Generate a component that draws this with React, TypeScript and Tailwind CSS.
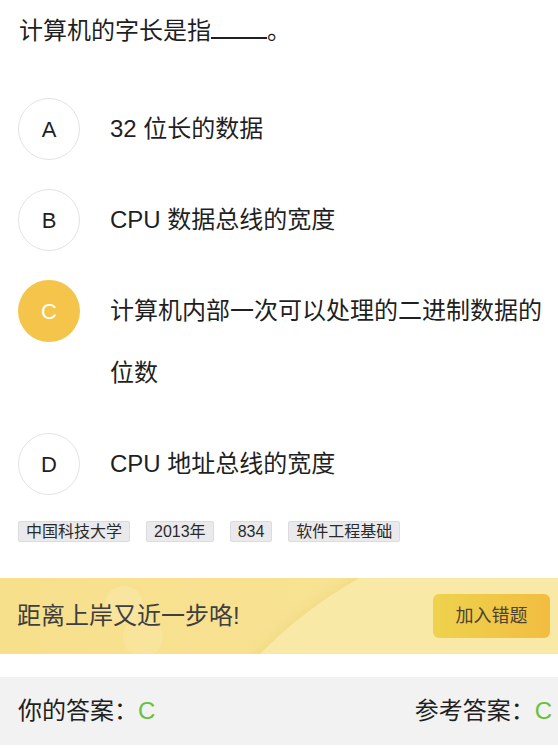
import React from "react";

// 选项数据
const options = [
  { key: "A", text: "32 位长的数据" },
  { key: "B", text: "CPU 数据总线的宽度" },
  { key: "C", text: "计算机内部一次可以处理的二进制数据的位数" },
  { key: "D", text: "CPU 地址总线的宽度" },
];

const tags = ["中国科技大学", "2013年", "834", "软件工程基础"];

const selected = "C";

const App = () => {
  return (
    <div className="w-[558px] h-[748px] bg-white overflow-hidden font-['Liberation_Sans','Noto_Sans_CJK_SC',sans-serif] text-[#1f1f1f]">
      {/* 题干 */}
      <div className="pt-[13px] px-[19px]">
        <p className="text-[24px] leading-[36px]">
          计算机的字长是指
          <span className="inline-block w-[56px] h-[22px] border-b-2 border-[#1f1f1f] align-baseline"></span>
          。
        </p>
      </div>

      {/* 选项 */}
      <div className="mt-[49px] pl-[18px] flex flex-col gap-[29px]">
        {options.map((opt) => {
          const active = opt.key === selected;
          return (
            <div key={opt.key} className="flex items-start gap-[30px]">
              <div
                className={
                  active
                    ? "shrink-0 w-[62px] h-[62px] rounded-full bg-[#f4c54a] text-white flex items-center justify-center text-[22px]"
                    : "shrink-0 w-[62px] h-[62px] rounded-full border border-[#e3e3e3] text-[#1f1f1f] flex items-center justify-center text-[22px]"
                }
              >
                {opt.key}
              </div>
              <div className="text-[24px] leading-[62px]">{opt.text}</div>
            </div>
          );
        })}
      </div>

      {/* 标签 */}
      <div className="mt-[26px] px-[18px] flex gap-[16px]">
        {tags.map((t) => (
          <span
            key={t}
            className="px-[7px] text-[16px] leading-[19px] text-[#2a2a2a] bg-[#eaeaec] border border-[#dcdcde] rounded-[2px]"
          >
            {t}
          </span>
        ))}
      </div>

      {/* 横幅 */}
      <div className="relative mt-[36px] h-[76px] overflow-hidden bg-gradient-to-r from-[#f7e08c] to-[#f8e498] flex items-center justify-between pl-[17px] pr-[8px]">
        <div className="absolute left-[140px] top-[-53px] w-[850px] h-[850px] rounded-full bg-[#f9e9a7] shadow-[-6px_0_10px_rgba(236,205,110,0.35)]"></div>
        <div className="absolute left-[105px] top-[8px] w-[38px] h-[38px] rounded-full bg-white/15"></div>
        <div className="absolute left-[123px] top-[39px] w-[40px] h-[40px] rounded-full bg-white/10"></div>
        <span className="relative text-[24px] text-[#3f3f3f]">距离上岸又近一步咯!</span>
        <button className="relative w-[117px] h-[44px] rounded-[6px] bg-gradient-to-r from-[#eed24e] to-[#f2bd40] text-[18px] text-[#4d4230]">
          加入错题
        </button>
      </div>

      {/* 答案 */}
      <div className="mt-[23px] h-[68px] bg-[#f2f2f2] flex items-center justify-between pl-[18px] pr-[6px] text-[24px] text-[#1f1f1f]">
        <span>
          你的答案：<span className="text-[#67c23a]">C</span>
        </span>
        <span>
          参考答案：<span className="text-[#67c23a]">C</span>
        </span>
      </div>
    </div>
  );
};

export default App;
